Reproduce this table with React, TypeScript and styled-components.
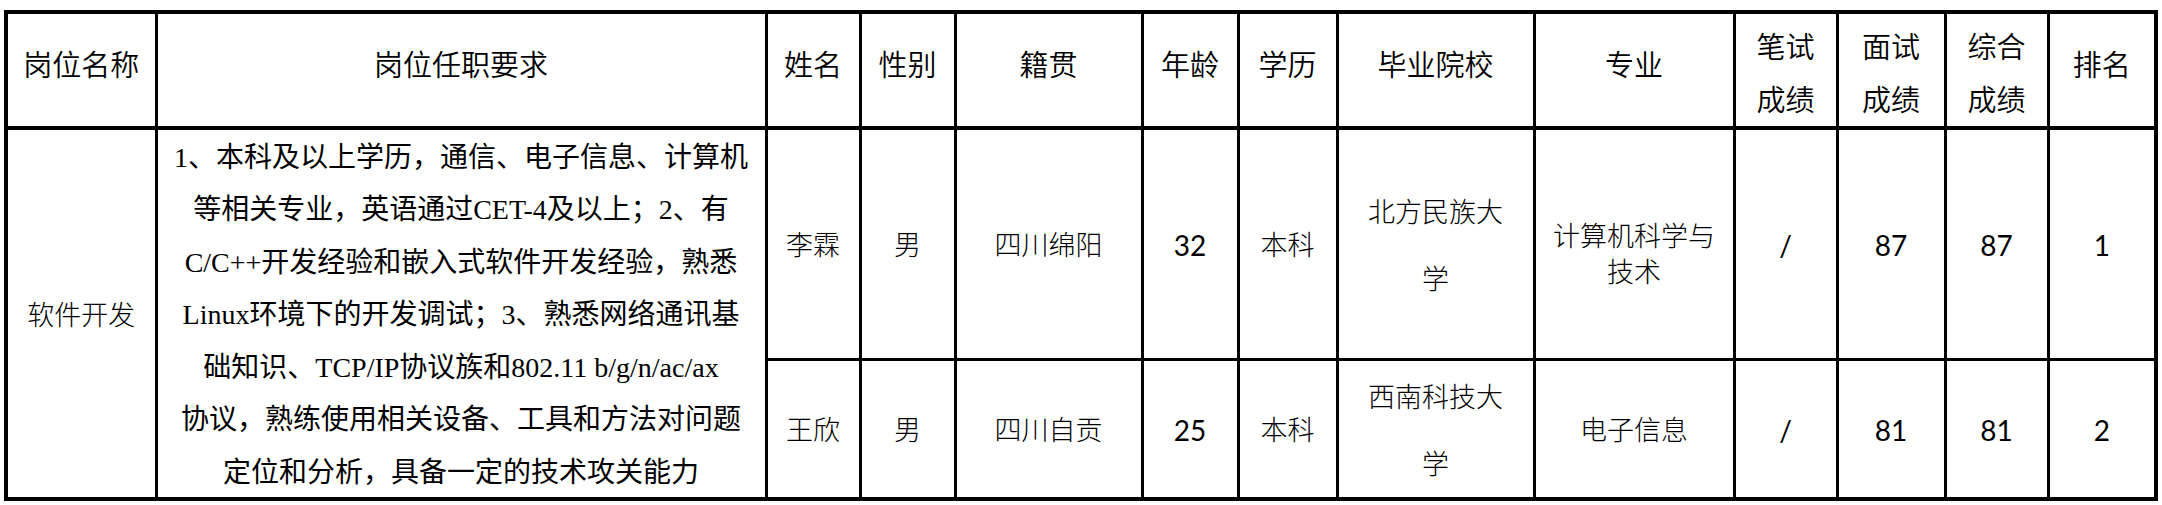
import React from 'react';
import styled, { createGlobalStyle } from 'styled-components';

const GlobalStyle = createGlobalStyle`
  html, body {
    margin: 0;
    padding: 0;
    background: #fff;
  }
  body {
    font-family: 'Noto Sans CJK SC', sans-serif;
    color: #000;
  }
`;

const Page = styled.div`
  padding: 10px 0 0 4px;
`;

// the black background shows through the gaps as the ruling lines
const Sheet = styled.div`
  display: grid;
  box-sizing: border-box;
  width: 2154px;
  grid-template-columns: 146.5px 607px 91px 92px 184px 93px 96px 194px 197px 100px 105px 100px 104.5px;
  grid-template-rows: 113px 228px 136px;
  gap: 3px;
  padding: 4px;
  background: #000;
`;

const Cell = styled.div<{ $rows?: number }>`
  background: #fff;
  display: flex;
  flex-direction: column;
  align-items: center;
  justify-content: center;
  text-align: center;
  grid-row: ${(p) => (p.$rows ? `span ${p.$rows}` : 'auto')};
`;

const HeadCell = styled(Cell)<{ $twoLine?: boolean }>`
  font-size: 29px;
  font-weight: 350;
  line-height: 53px;
  box-shadow: inset 0 -1px 0 #000;
  padding-bottom: ${(p) => (p.$twoLine ? '0' : '15px')};
  padding-top: ${(p) => (p.$twoLine ? '2px' : '0')};
`;

const TextCell = styled(Cell)<{ $lh?: number; $drop?: number }>`
  font-size: 27px;
  font-weight: 300;
  line-height: ${(p) => (p.$lh ? `${p.$lh}px` : '1.3')};
  padding-top: ${(p) => (p.$drop ? `${p.$drop}px` : '0')};
`;

const NumCell = styled(Cell)`
  font-family: 'Lato', 'Liberation Sans', sans-serif;
  font-size: 28px;
  padding-top: 2px;
`;

const ReqCell = styled(Cell)`
  font-family: 'Liberation Serif', 'Noto Sans CJK SC', serif;
  font-size: 28px;
  line-height: 52.5px;
  padding-top: 4px;
`;

const Line = styled.span`
  display: block;
  white-space: nowrap;
`;

const headers: { label: string[] }[] = [
  { label: ['岗位名称'] },
  { label: ['岗位任职要求'] },
  { label: ['姓名'] },
  { label: ['性别'] },
  { label: ['籍贯'] },
  { label: ['年龄'] },
  { label: ['学历'] },
  { label: ['毕业院校'] },
  { label: ['专业'] },
  { label: ['笔试', '成绩'] },
  { label: ['面试', '成绩'] },
  { label: ['综合', '成绩'] },
  { label: ['排名'] },
];

const requirement = [
  '1、本科及以上学历，通信、电子信息、计算机',
  '等相关专业，英语通过CET-4及以上；2、有',
  'C/C++开发经验和嵌入式软件开发经验，熟悉',
  'Linux环境下的开发调试；3、熟悉网络通讯基',
  '础知识、TCP/IP协议族和802.11 b/g/n/ac/ax',
  '协议，熟练使用相关设备、工具和方法对问题',
  '定位和分析，具备一定的技术攻关能力',
];

type Candidate = {
  name: string;
  sex: string;
  origin: string;
  age: string;
  degree: string;
  school: string[];
  major: string[];
  written: string;
  interview: string;
  total: string;
  rank: string;
};

const candidates: Candidate[] = [
  {
    name: '李霖',
    sex: '男',
    origin: '四川绵阳',
    age: '32',
    degree: '本科',
    school: ['北方民族大', '学'],
    major: ['计算机科学与', '技术'],
    written: '/',
    interview: '87',
    total: '87',
    rank: '1',
  },
  {
    name: '王欣',
    sex: '男',
    origin: '四川自贡',
    age: '25',
    degree: '本科',
    school: ['西南科技大', '学'],
    major: ['电子信息'],
    written: '/',
    interview: '81',
    total: '81',
    rank: '2',
  },
];

const Lines = ({ items }: { items: string[] }) => (
  <>
    {items.map((t, i) => (
      <Line key={i}>{t}</Line>
    ))}
  </>
);

const CandidateRow = ({ c }: { c: Candidate }) => (
  <>
    <TextCell>{c.name}</TextCell>
    <TextCell>{c.sex}</TextCell>
    <TextCell>{c.origin}</TextCell>
    <NumCell>{c.age}</NumCell>
    <TextCell>{c.degree}</TextCell>
    <TextCell $lh={67}>
      <Lines items={c.school} />
    </TextCell>
    <TextCell $lh={36} $drop={c.major.length > 1 ? 18 : 0}>
      <Lines items={c.major} />
    </TextCell>
    <NumCell>{c.written}</NumCell>
    <NumCell>{c.interview}</NumCell>
    <NumCell>{c.total}</NumCell>
    <NumCell>{c.rank}</NumCell>
  </>
);

const App = () => {
  return (
    <Page>
      <GlobalStyle />
      <Sheet>
        {headers.map((h, i) => (
          <HeadCell key={i} $twoLine={h.label.length > 1}>
            <Lines items={h.label} />
          </HeadCell>
        ))}
        <TextCell $rows={2}>软件开发</TextCell>
        <ReqCell $rows={2}>
          <Lines items={requirement} />
        </ReqCell>
        {candidates.map((c) => (
          <CandidateRow key={c.name} c={c} />
        ))}
      </Sheet>
    </Page>
  );
};

export default App;
